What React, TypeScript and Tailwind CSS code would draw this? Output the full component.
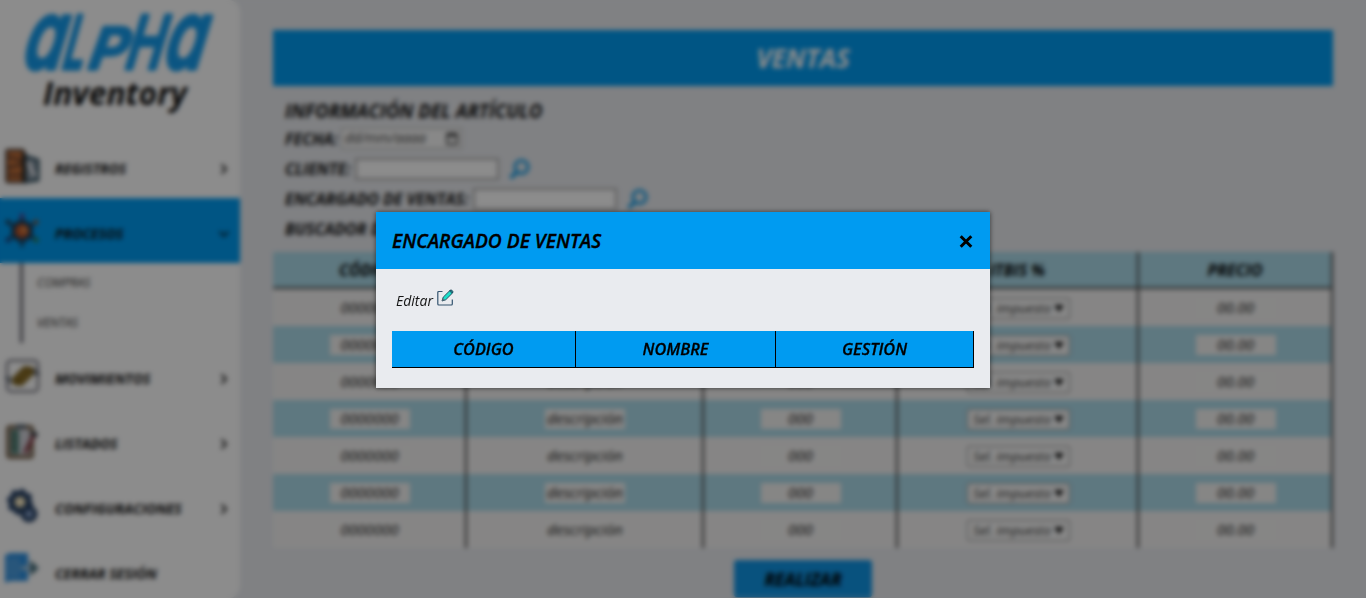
import React from "react";

const Chevron = ({ down }: { down?: boolean }) => (
  <svg width="12" height="12" viewBox="0 0 12 12" fill="none" stroke={down ? "#0a2a40" : "#222"} strokeWidth="2" className={down ? "rotate-90" : ""}>
    <path d="M3.5 1.5 8 6 3.5 10.5" />
  </svg>
);

const Logo = () => (
  <svg width="240" height="80" viewBox="0 0 240 80" className="block overflow-visible" fontFamily="Inter, sans-serif" fontWeight="600" fill="#159ced" stroke="#159ced" strokeWidth="3.500" strokeLinejoin="round">
    <g transform="translate(0 70) skewX(-11)">
      <text x="21" y="-1" fontSize="97" textLength="41" lengthAdjust="spacingAndGlyphs">a</text>
      <text x="61" y="-1" fontSize="74" textLength="22" lengthAdjust="spacingAndGlyphs">L</text>
      <text x="87" y="-1" fontSize="57" textLength="38" lengthAdjust="spacingAndGlyphs">P</text>
      <text x="124" y="-1" fontSize="74" textLength="37" lengthAdjust="spacingAndGlyphs">H</text>
      <text x="162" y="-1" fontSize="97" textLength="41" lengthAdjust="spacingAndGlyphs">a</text>
    </g>
  </svg>
);

const BoxesIcon = () => (
  <svg width="36" height="36" viewBox="0 0 36 36">
    <rect x="2.500" y="2" width="17" height="32" rx="1" fill="#c9733a" stroke="#4a3a32" strokeWidth="2.500" />
    <path d="m4 9 14 3M4 20l14-4M4 27h14" stroke="#5a3a2c" strokeWidth="2.500" />
    <path d="M21 8 34 12v20l-13 2z" fill="#8e9ca8" stroke="#335060" strokeWidth="3" />
    <path d="m24 14 4 9 4 5" stroke="#e8e8ee" strokeWidth="3.500" fill="none" />
    <path d="M20 4v30" stroke="#222" strokeWidth="3.500" />
  </svg>
);

const ProcessIcon = () => (
  <svg width="36" height="36" viewBox="0 0 36 36">
    <g stroke="#1c3a55" strokeWidth="3">
      <path d="M18 2v32M3 9l30 18M33 9 3 27" />
    </g>
    <circle cx="18" cy="18" r="11" fill="#1c3a55" />
    <circle cx="18" cy="18" r="7" fill="#b8562c" />
    <circle cx="20" cy="17" r="3" fill="#d98a4a" />
    <circle cx="18" cy="3" r="2.500" fill="#5e3a8c" />
    <circle cx="32" cy="9" r="2.500" fill="#8c5a3a" />
    <circle cx="32" cy="27" r="2.500" fill="#2e8048" />
    <circle cx="4" cy="27" r="2.500" fill="#203a78" />
    <circle cx="4" cy="9" r="2.500" fill="#203a50" />
  </svg>
);

const MoveIcon = () => (
  <svg width="36" height="36" viewBox="0 0 36 36">
    <rect x="3" y="2.500" width="31" height="31" rx="4" fill="none" stroke="#62626e" strokeWidth="2" />
    <path d="m8 20 12-12 9 1 1 7-12 12-9-1z" fill="#7c611e" />
    <path d="m13 20 11-8M17 24l9-9" stroke="#a0823a" strokeWidth="1.500" />
    <path d="M31 10v6h5M6 26v-6H1" stroke="#4c5660" strokeWidth="2" fill="none" />
  </svg>
);

const ListIcon = () => (
  <svg width="36" height="36" viewBox="0 0 36 36">
    <rect x="4" y="4" width="24" height="30" rx="2" fill="#d2d2da" stroke="#7c6852" strokeWidth="4" />
    <rect x="7" y="7" width="8" height="24" fill="#55857a" />
    <path d="M9 8v22" stroke="#37584c" strokeWidth="3" strokeDasharray="4 3" />
    <path d="M12 3.500h10" stroke="#4a5a68" strokeWidth="4" />
    <path d="M30 12 21 30" stroke="#8c4650" strokeWidth="4.500" />
    <path d="m28 9 5 4" stroke="#364048" strokeWidth="4.500" />
  </svg>
);

const GearsIcon = () => (
  <svg width="36" height="36" viewBox="0 0 36 36" fill="none" stroke="#2a4468">
    <circle cx="16" cy="14" r="8.500" strokeWidth="6" fill="#e8d49a" />
    <circle cx="16" cy="14" r="12" strokeWidth="2.500" strokeDasharray="5 4.400" />
    <circle cx="25" cy="26" r="6" strokeWidth="5" fill="#90a8d0" />
    <circle cx="16" cy="14" r="4" fill="#fff2d0" stroke="none" />
  </svg>
);

const ExitIcon = () => (
  <svg width="36" height="36" viewBox="0 0 36 36" className="-mt-[5px]">
    <path d="M1 5 6 3h18v28H6L1 33z" fill="#2c8fe0" />
    <path d="M3 8h13v20H3z" fill="#4a9de0" />
    <path d="M17 18h11" stroke="#a5c6dc" strokeWidth="4" />
    <path d="m26 10 9 8-9 8z" fill="#48707e" />
  </svg>
);

const Item = ({ icon, label, chevron = true, active }: { icon: React.ReactNode; label: string; chevron?: boolean; active?: boolean }) => (
  <div className={`flex h-[65px] w-[240px] items-center pr-[10px] pl-1 ${active ? "bg-[#009bf1]" : ""}`}>
    <span className="w-[51px] shrink-0">{icon}</span>
    <span className="flex-1 pt-[6px] text-[14px] leading-none font-bold whitespace-nowrap text-[#111]">{label}</span>
    {chevron && <span className="pt-[6px]"><Chevron down={active} /></span>}
  </div>
);

const Search = () => (
  <svg width="22" height="22" viewBox="0 0 22 22" fill="none" stroke="#1fa0e6" strokeWidth="3.200" className="shrink-0">
    <circle cx="12.500" cy="9" r="6.500" />
    <path d="M8 14 1.500 20" strokeWidth="4" />
  </svg>
);

const Select = () => (
  <span className="mt-[2px] ml-[2px] flex h-[21px] w-[103px] items-center justify-between rounded-[2px] border border-[#888] bg-[#f8f8f8] px-[5px] text-[13.300px] text-[#333]">
    <span className="whitespace-nowrap">Sel. impuesto</span>
    <svg width="10" height="7" viewBox="0 0 10 7" className="shrink-0"><path d="M0 0h10L5 7z" fill="#111" /></svg>
  </span>
);

const Value = ({ children }: { children: string }) => (
  <span className="ml-px flex h-[20px] w-[80px] items-center justify-center bg-[#f5f4f3] text-[15px] text-[#222]">{children}</span>
);

const cols = "grid grid-cols-[194px_237px_194px_241px_194px]";
const cell = "flex items-center justify-center border-r-2 border-[#444]";

const Row = ({ tinted }: { tinted: boolean }) => (
  <div className={`${cols} h-[37px] ${tinted ? "bg-[#abdae9]" : "bg-[#f4f3f3]"}`}>
    <div className={cell}><Value>0000000</Value></div>
    <div className={cell}><Value>descripción</Value></div>
    <div className={cell}><Value>000</Value></div>
    <div className={cell}><Select /></div>
    <div className={cell}><Value>00.00</Value></div>
  </div>
);

const EditIcon = () => (
  <svg width="17" height="17" viewBox="0 0 17 17" fill="none" className="-mt-px">
    <path d="M5.500 2.500H1.800Q.8 2.500 .8 3.500V15q0 1 1 1h12.500q1 0 1-1v-4.500" stroke="#34546f" strokeWidth="1.200" />
    <path d="m5 12 1.200-3.800L13 1.400Q14 .5 15.200 1.500T15.500 4L8.700 10.800z" fill="#1cdfca" stroke="#1d4055" strokeWidth=".9" />
    <path d="m12.500 1.900 2.600 2.500 .6-1.200-1.800-1.900z" fill="#2a7a88" stroke="#1d4055" strokeWidth=".6" />
    <path d="m5 12 .9-2.800 1.900 1.800z" fill="#60717c" />
  </svg>
);

export default function App() {
  return (
    <div className="relative h-[598px] w-[1366px] overflow-hidden bg-[#e9ebef] font-['Open_Sans',sans-serif] text-black italic">
      <div className="flex h-full">
        <aside className="h-full w-[240px] shrink-0 overflow-hidden rounded-r-[12px] bg-white">
          <div className="flex h-[133px] flex-col">
            <Logo />
            <div className="-mt-[5px] pl-[43px] text-[31.800px] leading-[36px] font-bold text-[#111]">Inventory</div>
          </div>
          <Item icon={<BoxesIcon />} label="REGISTROS" />
          <Item icon={<ProcessIcon />} label="PROCESOS" active />
          <div className="ml-[20px] flex h-[80px] flex-col border-l-[3px] border-[#666670] pl-[14px] text-[12.300px] text-[#333]">
            <span className="leading-[39px]">COMPRAS</span>
            <span className="leading-[41px]">VENTAS</span>
          </div>
          <Item icon={<MoveIcon />} label="MOVIMIENTOS" />
          <Item icon={<ListIcon />} label="LISTADOS" />
          <Item icon={<GearsIcon />} label="CONFIGURACIONES" />
          <Item icon={<ExitIcon />} label="CERRAR SESIÓN" chevron={false} />
        </aside>

        <main className="ml-[33px] w-[1060px] pt-[30px]">
          <div className="flex h-[56px] items-center justify-center bg-[#009bf1] pt-px text-[26.200px] font-bold text-white">VENTAS</div>
          <div className="h-[166px] pt-[12px] pl-[12px] font-bold text-[#111]">
            <div className="text-[18.720px] leading-[26px]">INFORMACIÓN DEL ARTÍCULO</div>
            <div className="flex h-[29px] items-center text-[16px]">
              <span className="w-[56px]">FECHA:</span>
              <span className="flex h-[21px] w-[121px] items-center justify-between border border-[#aaa] bg-[#f8f8f8] px-[3px] text-[13.800px] font-normal text-[#444]">
                <span>dd/mm/aaaa</span>
                <svg width="12" height="13" viewBox="0 0 12 13" fill="none" stroke="#222" strokeWidth="1.300"><path d="M1 2h10v10H1zM1 4h10M3.500 0v2M8.500 0v2" /></svg>
              </span>
            </div>
            <div className="flex h-[32px] items-center text-[16px]">
              <span className="w-[70px]">CLIENTE:</span>
              <span className="mr-[10px] h-[22px] w-[144px] border-2 border-[#aaa] bg-white" />
              <Search />
            </div>
            <div className="flex h-[28px] items-center text-[16px]">
              <span className="w-[188px] whitespace-nowrap">ENCARGADO DE VENTAS:</span>
              <span className="mr-[10px] h-[22px] w-[144px] border-2 border-[#aaa] bg-white" />
              <Search />
            </div>
            <div className="flex h-[32px] items-center text-[16px]">BUSCADOR DE</div>
          </div>
          <div className={`${cols} h-[37px] border-b-2 border-[#444] bg-[#abdae9] text-[16px] font-bold`}>
            <div className={cell}>CÓDIGO</div>
            <div className={cell}>DESCRIPCIÓN</div>
            <div className={cell}>CANTIDAD</div>
            <div className={cell}>ITBIS %</div>
            <div className={cell}>PRECIO</div>
          </div>
          {[0, 1, 2, 3, 4, 5, 6].map((i) => <Row key={i} tinted={i % 2 === 1} />)}
          <div className="flex justify-center pt-[12px]">
            <button className="h-[37px] w-[138px] rounded-[3px] bg-[#1095e6] pt-px text-[17.600px] font-bold italic">REALIZAR</button>
          </div>
        </main>
      </div>

      <div className="absolute inset-0 flex justify-center bg-black/45 pt-[212px] backdrop-blur-[2.500px]">
        <section className="h-[176px] w-[614px] bg-[#e9ebef] shadow-[0_0_5px_rgba(0,0,0,0.6)]">
          <header className="flex h-[57px] items-center justify-between bg-[#009bf1] px-4">
            <h2 className="pt-px text-[19.200px] font-semibold [-webkit-text-stroke:0.350px_black]">ENCARGADO DE VENTAS</h2>
            <svg width="16" height="16" viewBox="0 0 16 16" stroke="#000" strokeWidth="3"><path d="m2.700 3.200 10.600 10.600M13.300 3.200 2.700 13.800" /></svg>
          </header>
          <div className="px-4 pt-[21px]">
            <div className="flex h-[41px] gap-[4px] pl-[4px] text-[14px] leading-[22px] text-[#151515]">
              <span>Editar</span>
              <EditIcon />
            </div>
            <div className="grid h-[37px] grid-cols-[184px_200px_198px] border-b border-black bg-[#009bf1] text-[16.300px] font-semibold [-webkit-text-stroke:0.300px_black]">
              <div className="flex items-center justify-center border-r border-black">CÓDIGO</div>
              <div className="flex items-center justify-center border-r border-black">NOMBRE</div>
              <div className="flex items-center justify-center border-r border-black">GESTIÓN</div>
            </div>
          </div>
        </section>
      </div>
    </div>
  );
}
